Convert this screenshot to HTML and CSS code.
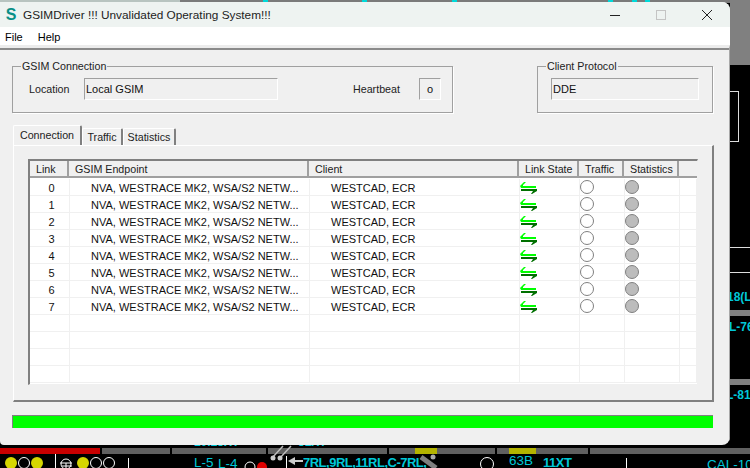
FILE: index.html
```html
<!DOCTYPE html>
<html lang="en">
  <head>
    <meta charset="UTF-8" />
    <meta name="viewport" content="width=device-width, initial-scale=1.0" />
    <title>GSIMDriver</title>
    <link rel="stylesheet" href="styles.css">
  </head>

  <body>
    <!-- panel behind the window -->
    <div id="desktop">
      <div class="top-strip"></div>
      <div class="top-strip-light"></div>
      <i class="dot" style="left:263px"></i>
      <i class="dot" style="left:362px"></i>
      <i class="dot" style="left:452px"></i>
      <i class="dot" style="left:608px"></i>
      <i class="dot" style="left:632px"></i>
      <i class="dot" style="left:645px"></i>

      <div class="side-gray"></div>
      <div class="side-box"></div>
      <div class="side-line" style="top:247px"></div>
      <div class="side-line" style="top:272px"></div>
      <div class="side-bar" style="top:310px"></div>
      <div class="side-bar" style="top:379px"></div>
      <div class="cyan" style="left:727px;top:292px">18(L</div>
      <div class="cyan" style="left:729px;top:322px">L-76</div>
      <div class="cyan" style="left:726px;top:390px">L-81</div>

      <div class="cyan" style="left:194px;top:437px">10.25XT</div>
      <div class="cyan" style="left:298px;top:437px">51XT</div>

      <div class="track" style="left:0;width:100px;background:#c80000"></div>
      <div class="track" style="left:102px;width:68px"></div>
      <div class="track" style="left:172px;width:94px"></div>
      <div class="track" style="left:268px;width:119px"></div>
      <div class="track" style="left:389px;width:106px"></div>
      <div class="track" style="left:497px;width:91px"></div>
      <div class="track" style="left:590px;width:160px"></div>
      <div class="track" style="left:415px;width:22px;background:#b4b400"></div>
      <div class="track" style="left:509px;width:27px;background:#b4b400"></div>

      <div class="cyan cyan-thin" style="left:194px;top:458px">L-5</div>
      <div class="cyan cyan-thin" style="left:218px;top:459px">L-4</div>
      <div class="cyan cyan-route" style="left:303px;top:458px">7RL,9RL,11RL,C-7RL,</div>
      <div class="cyan cyan-thin" style="left:509px;top:456px">63B</div>
      <div class="cyan cyan-route" style="left:543px;top:458px">11XT</div>
      <div class="cyan cyan-thin" style="left:707px;top:460px">CAL-10</div>

      <svg class="scada" width="750" height="468" viewBox="0 0 750 468">
        <g fill="none" stroke="#fff">
          <circle cx="11" cy="463" r="6" fill="#d6d600" stroke="none" />
          <circle cx="24" cy="463" r="5.500" />
          <circle cx="37" cy="463" r="6" fill="#d6d600" stroke="none" />
          <path d="M55.500 454V468M128.500 458V468M286.500 456V468M626.500 458V468" />
          <circle cx="66" cy="464" r="5" />
          <path d="M60 463H72M66 463V468M62 466H72" />
          <circle cx="83" cy="463" r="6" fill="#d6d600" stroke="none" />
          <circle cx="96" cy="463" r="5.500" />
          <circle cx="109" cy="463" r="5.500" />
          <circle cx="250" cy="467" r="5" />
          <circle cx="487" cy="464" r="6.500" />
        </g>
        <circle cx="262" cy="467" r="5" fill="#e00000" />
        <path d="M272 458L283 446M280 458L291 446" stroke="#bbb" stroke-width="1.500" />
        <circle cx="273" cy="458" r="2.500" fill="#ccc" />
        <circle cx="280" cy="458" r="2.500" fill="#ccc" />
        <path d="M288 461L295 457V465ZM295 460H303V462H295Z" fill="#ccc" />
        <path d="M421 457L436 468" stroke="#808080" stroke-width="5" />
        <circle cx="433" cy="457" r="2.500" fill="#aaa" />
      </svg>
    </div>

    <div id="window">
      <div id="title-bar">
        <span class="app-icon">S</span>
        <span class="title-text">GSIMDriver !!! Unvalidated Operating System!!!</span>
        <div class="caption-buttons">
          <svg width="12" height="12" viewBox="0 0 12 12"><path d="M1 6.500H11" stroke="#222" /></svg>
          <svg width="12" height="12" viewBox="0 0 12 12"><rect x="1.500" y="1.500" width="9" height="9" fill="none" stroke="#c4c4c4" /></svg>
          <svg width="12" height="12" viewBox="0 0 12 12"><path d="M1 1L11 11M11 1L1 11" stroke="#222" /></svg>
        </div>
      </div>

      <div id="menu-bar">
        <span>File</span>
        <span>Help</span>
      </div>

      <div id="client-area">
        <div class="group-row">
          <fieldset class="group group-connection">
            <legend>GSIM Connection</legend>
            <span class="field-label label-location">Location</span>
            <div class="sunken field-location">Local GSIM</div>
            <span class="field-label label-heartbeat">Heartbeat</span>
            <div class="sunken field-heartbeat">o</div>
          </fieldset>
          <fieldset class="group group-protocol">
            <legend>Client Protocol</legend>
            <div class="sunken field-protocol">DDE</div>
          </fieldset>
        </div>

        <div class="tabs">
          <div class="tab tab-active">Connection</div>
          <div class="tab tab-traffic">Traffic</div>
          <div class="tab tab-stats">Statistics</div>
        </div>

        <div class="tab-panel">
          <div id="link-list">
            <div class="list-header">
              <div class="col-link">Link</div>
              <div class="col-endpoint">GSIM Endpoint</div>
              <div class="col-client">Client</div>
              <div class="col-state">Link State</div>
              <div class="col-traffic">Traffic</div>
              <div class="col-stats">Statistics</div>
              <div class="col-rest"></div>
            </div>
            <div id="list-rows"></div>
          </div>
        </div>

        <div class="progress"></div>
      </div>
    </div>

    <script>
      const listRows = document.getElementById("list-rows");
      const arrows = `
        <svg width="18" height="13" viewBox="0 0 18 13">
          <path d="M0 5H16V7H1ZM0 5L4 1H6L3 4V5Z" fill="#00ff00" />
          <path d="M1 8H17V10H1ZM17 10L12 13H11L13 10Z" fill="#007000" />
        </svg>`;

      for (let i = 0; i < 12; i++) {
        const row = document.createElement("div");
        row.className = "list-row";

        if (i < 8) {
          row.innerHTML = `
            <div class="col-link">${i}</div>
            <div class="col-endpoint">NVA, WESTRACE MK2, WSA/S2 NETW...</div>
            <div class="col-client">WESTCAD, ECR</div>
            <div class="col-state">${arrows}</div>
            <div class="col-traffic"><span class="lamp"></span></div>
            <div class="col-stats"><span class="lamp lamp-off"></span></div>
            <div class="col-rest"></div>
          `;
        } else {
          row.innerHTML = `
            <div class="col-link"></div>
            <div class="col-endpoint"></div>
            <div class="col-client"></div>
            <div class="col-state"></div>
            <div class="col-traffic"></div>
            <div class="col-stats"></div>
            <div class="col-rest"></div>
          `;
        }
        listRows.appendChild(row);
      }
    </script>
  </body>
</html>
```

FILE: styles.css
```css
* {
  margin: 0;
  padding: 0;
  box-sizing: border-box;
}

html,
body {
  width: 750px;
  height: 468px;
  overflow: hidden;
}

body {
  position: relative;
  background-color: #000;
  font-family: "Liberation Sans", Arial, sans-serif;
  font-size: 10.7px;
  color: #111;
}

/* backdrop */
#desktop {
  position: absolute;
  left: 0;
  top: 0;
  width: 750px;
  height: 468px;
  overflow: hidden;
}

.top-strip {
  position: absolute;
  left: 0;
  top: 0;
  width: 750px;
  height: 3px;
  background-color: #7a7a7a;
}

.top-strip-light {
  position: absolute;
  left: 0;
  top: 0;
  width: 180px;
  height: 2px;
  background-color: #b8c4c0;
}

.dot {
  position: absolute;
  top: 0;
  width: 5px;
  height: 2px;
  background-color: #00d8d8;
}

.side-gray {
  position: absolute;
  left: 730px;
  top: 0;
  width: 20px;
  height: 65px;
  background-color: #808080;
}

.side-box {
  position: absolute;
  left: 730px;
  top: 91px;
  width: 9px;
  height: 51px;
  border: 1px solid #ddd;
  border-left: none;
}

.side-line {
  position: absolute;
  left: 730px;
  width: 20px;
  height: 1px;
  background-color: #ddd;
}

.side-bar {
  position: absolute;
  left: 730px;
  width: 20px;
  height: 6px;
  background-color: #808080;
}

.cyan {
  position: absolute;
  font-size: 12px;
  line-height: 10px;
  font-weight: bold;
  white-space: nowrap;
  color: #00c8d8;
}

.cyan-thin {
  font-size: 13.500px;
  font-weight: normal;
}

.cyan-route {
  font-size: 13px;
  letter-spacing: -0.5px;
}

.track {
  position: absolute;
  top: 448px;
  height: 6px;
  background-color: #606060;
}

.scada {
  position: absolute;
  left: 0;
  top: 0;
}

/* main window */
#window {
  position: absolute;
  left: 0;
  top: 2px;
  width: 730px;
  height: 443px;
  display: flex;
  flex-direction: column;
  background-color: #f0f0f0;
  border-radius: 0 8px 8px 4px;
  overflow: hidden;
}

#title-bar {
  height: 25px;
  flex-shrink: 0;
  display: flex;
  align-items: center;
  background-color: #eef3f1;
  padding-left: 4px;
  font-size: 11.800px;
}

.app-icon {
  width: 14px;
  font-size: 16px;
  font-weight: bold;
  color: #0a8f86;
  text-align: center;
}

.title-text {
  margin-left: 5px;
  color: #222;
}

.caption-buttons {
  margin-left: auto;
  display: flex;
  gap: 34px;
  padding-right: 17px;
}

#menu-bar {
  height: 18px;
  flex-shrink: 0;
  display: flex;
  align-items: center;
  gap: 15px;
  padding: 1px 0 0 5px;
  background-color: #fff;
  color: #000;
  font-size: 11px;
}

#client-area {
  flex: 1;
  display: flex;
  flex-direction: column;
  padding: 12px 16px 0 12px;
  border-top: 3px solid #ececec;
  border-right: 1px solid #a8a8a8;
  box-shadow: inset 0 2px 0 #8a8a8a;
}

.group-row {
  display: flex;
  justify-content: space-between;
}

.group {
  height: 53px;
  display: flex;
  align-items: flex-start;
  padding-top: 5px;
  border: 1px solid #a0a0a0;
  box-shadow: 1px 1px 0 #fff;
  background: transparent;
}

.group legend {
  margin-left: 8px;
  padding: 0 1px;
  line-height: 13px;
  color: #222;
}

.group-connection {
  width: 441px;
}

.group-protocol {
  width: 176px;
}

.field-label {
  line-height: 22px;
  color: #222;
}

.label-location {
  width: 55px;
  margin-left: 16px;
}

.sunken {
  height: 22px;
  display: flex;
  align-items: center;
  padding-left: 1px;
  font-size: 11px;
  border: 1px solid #fff;
  border-top-color: #a0a0a0;
  border-left-color: #a0a0a0;
}

.field-location {
  width: 194px;
}

.label-heartbeat {
  width: 66px;
  margin-left: 75px;
}

.field-heartbeat {
  width: 22px;
  justify-content: center;
  padding-left: 0;
}

.field-protocol {
  width: 148px;
  margin-left: 13px;
}

.tabs {
  display: flex;
  align-items: flex-end;
  margin-top: 12px;
  padding-left: 1px;
  height: 20px;
}

.tab {
  height: 17px;
  display: flex;
  align-items: center;
  justify-content: center;
  border: 1px solid #fff;
  border-bottom: none;
  border-right: 2px solid #808080;
  border-radius: 2px 2px 0 0;
  color: #222;
}

.tab-active {
  width: 69px;
  height: 20px;
  padding-bottom: 2px;
}

.tab-traffic {
  width: 41px;
}

.tab-stats {
  width: 53px;
  margin-left: 0;
}

.tab-panel {
  width: 701px;
  height: 257px;
  margin-left: 1px;
  padding: 13px 0 0 14px;
  border: 2px solid #fff;
  border-top-width: 1px;
  border-left-width: 1px;
  border-right-color: #808080;
  border-bottom-color: #808080;
}

#link-list {
  width: 670px;
  height: 226px;
  overflow: hidden;
  background-color: #fff;
  border: 2px solid #808080;
  border-right: 1px solid #f0f0f0;
  border-bottom: 1px solid #f0f0f0;
}

.list-header {
  display: flex;
  height: 17px;
  background-color: #f0f0f0;
  margin-bottom: 1px;
  border-bottom: 2px solid #a0a0a0;
}

.list-header > div {
  display: flex;
  align-items: center;
  padding-left: 6px;
  border-right: 2px solid #a0a0a0;
  color: #222;
  white-space: nowrap;
}

.list-header > .col-link {
  width: 39px;
}

.list-header > .col-rest {
  border-right: none;
}

.list-row {
  display: flex;
  height: 17px;
  border-bottom: 1px solid #f0f0f0;
}

.list-row > div {
  display: flex;
  align-items: center;
  border-right: 1px solid #f0f0f0;
  color: #111;
  font-size: 11px;
  white-space: nowrap;
}

.col-link {
  width: 40px;
}

.list-row > .col-link {
  justify-content: center;
  padding: 1px 0 0 4px;
}

.col-endpoint {
  width: 240px;
}

.list-row > .col-endpoint {
  padding: 1px 0 0 21px;
}

.col-client {
  width: 210px;
}

.list-row > .col-client {
  padding: 1px 0 0 21px;
}

.col-state {
  width: 60px;
}

.col-traffic {
  width: 45px;
}

.col-stats {
  width: 55px;
}

.col-rest {
  flex: 1;
}

.lamp {
  width: 14px;
  height: 14px;
  border-radius: 50%;
  border: 1px solid #808080;
  background-color: #fff;
}

.lamp-off {
  background-color: #bcbcbc;
}

.progress {
  height: 13px;
  margin-top: 13px;
  width: 701px;
  background-color: #00ff00;
  border-top: 1px solid #808080;
  border-left: 1px solid #808080;
}
```
